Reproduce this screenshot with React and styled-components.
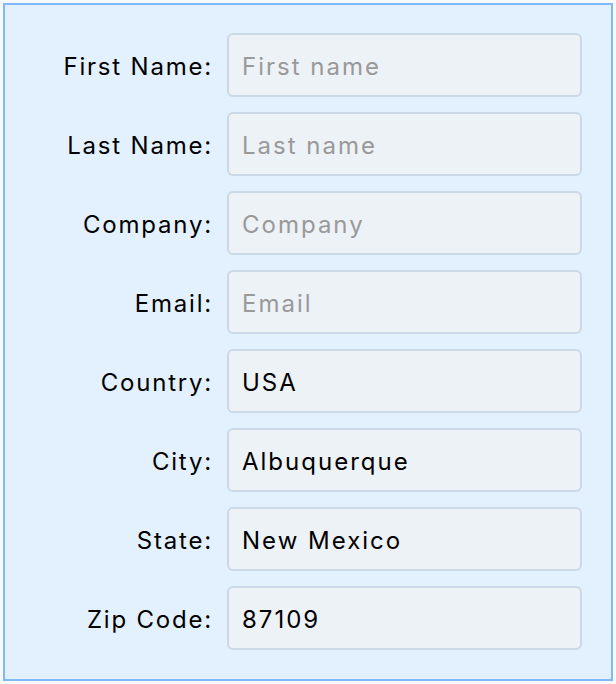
import React from 'react';
import styled, { createGlobalStyle } from 'styled-components';

const GlobalStyle = createGlobalStyle`
  html, body {
    margin: 0;
    padding: 0;
    background: #f7f9fb;
  }
  body {
    padding: 3px;
    font-family: Inter, "Noto Sans", sans-serif;
  }
`;

const FormBox = styled.form`
  box-sizing: border-box;
  width: 610px;
  height: 678px;
  background: #e3f1fe;
  border: 2px solid #80b9fa;
  padding: 28px 29px 29px 0;
  display: grid;
  grid-template-columns: 206px 1fr;
  grid-auto-rows: 64px;
  column-gap: 16px;
  row-gap: 15px;
  align-items: center;
`;

const Label = styled.label`
  text-align: right;
  font-size: 24px;
  letter-spacing: 1.8px;
  padding-top: 3px;
  margin-right: -2px;
  color: #000;
`;

const Input = styled.input`
  box-sizing: border-box;
  height: 64px;
  width: 100%;
  margin: 0;
  padding: 3px 13px 0;
  border: 2px solid #cbd8e8;
  border-radius: 6px;
  background: #edf2f7;
  font-family: Inter, "Noto Sans", sans-serif;
  font-size: 24px;
  letter-spacing: 2px;
  color: #000;
  outline: none;

  &::placeholder {
    color: #999999;
  }
`;

const fields = [
  { id: 'first', label: 'First Name:', placeholder: 'First name' },
  { id: 'last', label: 'Last Name:', placeholder: 'Last name' },
  { id: 'company', label: 'Company:', placeholder: 'Company' },
  { id: 'email', label: 'Email:', placeholder: 'Email' },
  { id: 'country', label: 'Country:', value: 'USA' },
  { id: 'city', label: 'City:', value: 'Albuquerque' },
  { id: 'state', label: 'State:', value: 'New Mexico' },
  { id: 'zip', label: 'Zip Code:', value: '87109' },
];

const App = () => {
  return (
    <>
      <GlobalStyle />
      <FormBox onSubmit={e => e.preventDefault()}>
        {fields.map(f => (
          <React.Fragment key={f.id}>
            <Label htmlFor={f.id}>{f.label}</Label>
            <Input
              id={f.id}
              placeholder={f.placeholder}
              defaultValue={f.value}
            />
          </React.Fragment>
        ))}
      </FormBox>
    </>
  );
};

export default App;
